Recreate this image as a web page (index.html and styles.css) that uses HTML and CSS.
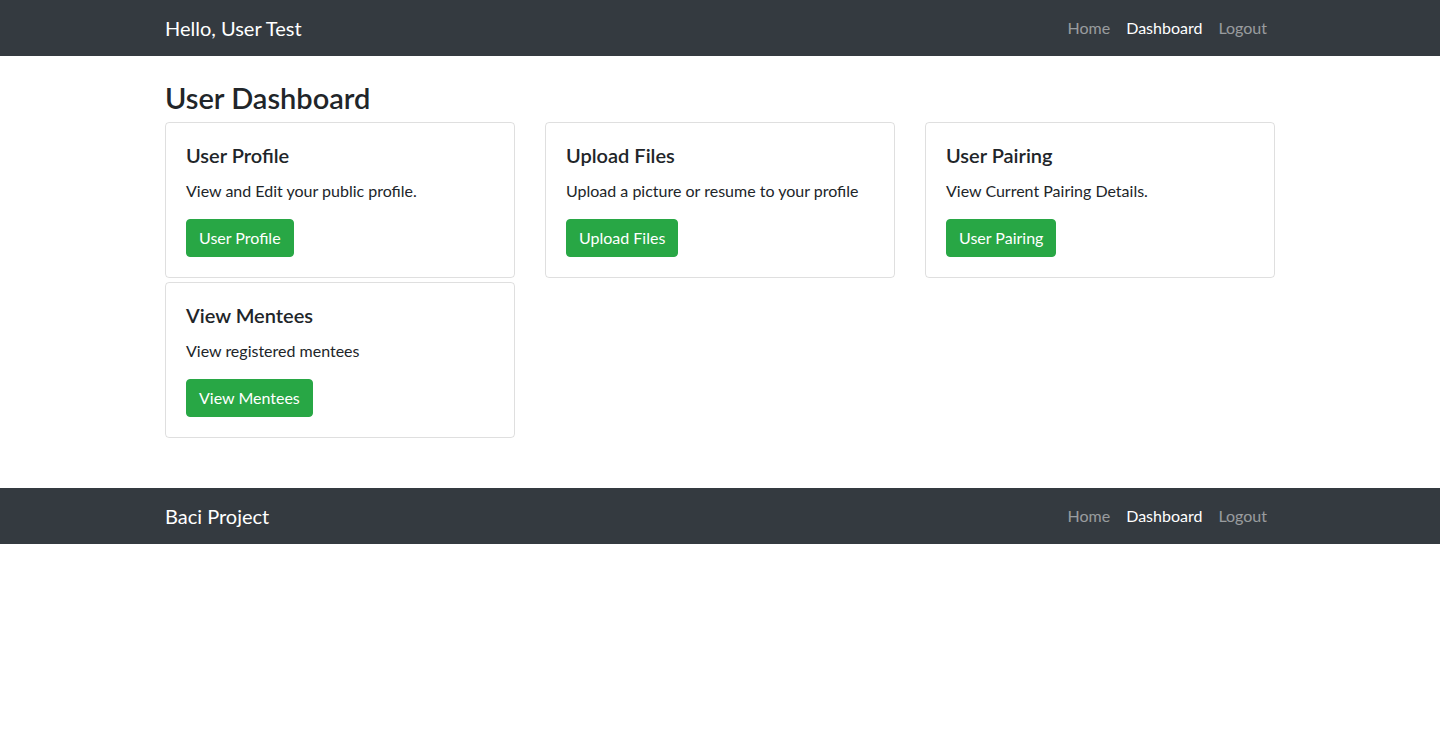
FILE: index.html
```html
<!DOCTYPE html>
<html lang="en">
<head>
<meta charset="utf-8">
<title>User Dashboard</title>
<link rel="stylesheet" href="styles.css">
</head>
<body>
<nav class="navbar">
  <div class="container navbar-inner">
    <a class="brand" href="#">Hello, User Test</a>
    <ul class="nav">
      <li><a class="nav-link" href="#">Home</a></li>
      <li><a class="nav-link active" href="#">Dashboard</a></li>
      <li><a class="nav-link" href="#">Logout</a></li>
    </ul>
  </div>
</nav>
<main class="container main">
  <h1 class="page-title">User Dashboard</h1>
  <div class="card-grid">
    <div class="card">
      <h5 class="card-title">User Profile</h5>
      <p class="card-text">View and Edit your public profile.</p>
      <a class="btn" href="#">User Profile</a>
    </div>
    <div class="card">
      <h5 class="card-title">Upload Files</h5>
      <p class="card-text">Upload a picture or resume to your profile</p>
      <a class="btn" href="#">Upload Files</a>
    </div>
    <div class="card">
      <h5 class="card-title">User Pairing</h5>
      <p class="card-text">View Current Pairing Details.</p>
      <a class="btn" href="#">User Pairing</a>
    </div>
    <div class="card">
      <h5 class="card-title">View Mentees</h5>
      <p class="card-text">View registered mentees</p>
      <a class="btn" href="#">View Mentees</a>
    </div>
  </div>
</main>
<footer class="navbar footer">
  <div class="container navbar-inner">
    <a class="brand" href="#">Baci Project</a>
    <ul class="nav">
      <li><a class="nav-link" href="#">Home</a></li>
      <li><a class="nav-link active" href="#">Dashboard</a></li>
      <li><a class="nav-link" href="#">Logout</a></li>
    </ul>
  </div>
</footer>
</body>
</html>
```
FILE: styles.css
```css
* { box-sizing: border-box; }
html, body { margin: 0; padding: 0; }
body {
  font-family: "Lato", "Open Sans", sans-serif;
  font-size: 16px;
  line-height: 1.5;
  color: #212529;
  background: #fff;
}
a { text-decoration: none; }
.container {
  width: 1140px;
  margin: 0 auto;
  padding: 0 15px;
}
.navbar {
  background: #343a40;
  height: 56px;
}
.navbar-inner {
  display: flex;
  align-items: center;
  justify-content: space-between;
  height: 56px;
}
.brand {
  color: #fff;
  font-size: 20px;
  line-height: 30px;
}
.nav {
  display: flex;
  list-style: none;
  margin: 0;
  padding: 0;
}
.nav-link {
  display: block;
  padding: 8px 8px;
  color: rgba(255,255,255,.5);
}
.nav-link.active { color: #fff; }
.main {
  padding-top: 25px;
  padding-bottom: 50px;
}
.page-title {
  margin: 0 0 6px;
  font-size: 29px;
  font-weight: 600;
  line-height: 1.2;
}
.card-grid {
  display: grid;
  grid-template-columns: repeat(3, 1fr);
  column-gap: 30px;
  row-gap: 4px;
}
.card {
  border: 1px solid rgba(0,0,0,.125);
  border-radius: 4px;
  padding: 20px;
}
.card-title {
  margin: 0 0 12px;
  font-size: 20px;
  font-weight: 600;
  line-height: 1.2;
}
.card-text {
  margin: 0 0 16px;
}
.btn {
  display: inline-block;
  background: #28a745;
  color: #fff;
  border: 1px solid #28a745;
  border-radius: 4px;
  padding: 6px 12px;
  line-height: 24px;
  font-size: 16px;
}
```
